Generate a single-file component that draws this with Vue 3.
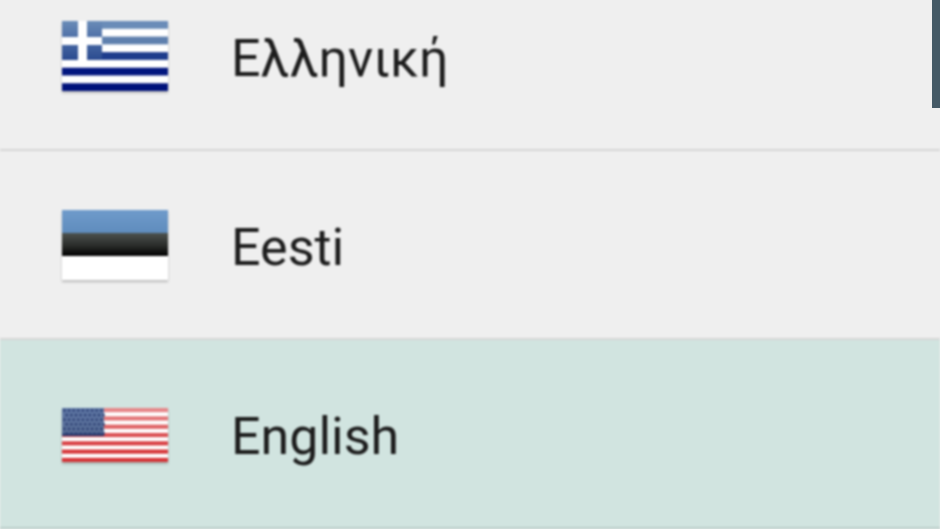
<script setup>
const languages = [
  { name: 'Ελληνική', flag: 'gr' },
  { name: 'Eesti', flag: 'ee' },
  { name: 'English', flag: 'us', selected: true }
]
const usStripes = Array.from({ length: 7 }, (_, i) => i * 2)
const grStripes = [
  { y: 0, fill: '#6a8cb8' },
  { y: 2, fill: '#5f80ae' },
  { y: 4, fill: '#1d3c8c' },
  { y: 6, fill: '#02167f' },
  { y: 8, fill: '#00127a' }
]
const stars = []
for (let r = 0; r < 6; r++) for (let c = 0; c < 9; c++) stars.push({ x: 2.5 + c * 4.6 + (r % 2) * 2.3, y: 2.5 + r * 4.6 })
</script>

<template>
  <main class="screen">
    <ul class="list">
      <li v-for="lang in languages" :key="lang.name" class="row" :class="{ selected: lang.selected }">
        <div class="flag-slot">
          <svg v-if="lang.flag === 'gr'" class="flag flag-tall" viewBox="0 0 106 70" preserveAspectRatio="none">
            <defs>
              <linearGradient id="grCanton" x1="0" y1="0" x2="0" y2="1">
                <stop offset="0" stop-color="#6a8cb8" />
                <stop offset="1" stop-color="#2a4a90" />
              </linearGradient>
            </defs>
            <rect width="106" height="70" fill="#fff" />
            <rect v-for="s in grStripes" :key="s.y" width="106" height="7.8" :y="s.y * 7.78" :fill="s.fill" />
            <rect width="40" height="39" fill="url(#grCanton)" />
            <rect x="16" width="9" height="39" fill="#fff" />
            <rect y="16" width="40" height="8" fill="#fff" />
          </svg>
          <svg v-else-if="lang.flag === 'ee'" class="flag flag-tall" viewBox="0 0 106 70" preserveAspectRatio="none">
            <defs>
              <linearGradient id="eeBlue" x1="0" y1="0" x2="0" y2="1">
                <stop offset="0" stop-color="#6f9bcb" />
                <stop offset="1" stop-color="#5f8cbd" />
              </linearGradient>
              <linearGradient id="eeBlack" x1="0" y1="0" x2="0" y2="1">
                <stop offset="0" stop-color="#4c524e" />
                <stop offset=".55" stop-color="#2a2c2a" />
                <stop offset="1" stop-color="#000" />
              </linearGradient>
            </defs>
            <rect width="106" height="23" fill="url(#eeBlue)" />
            <rect y="23" width="106" height="23" fill="url(#eeBlack)" />
            <rect y="46" width="106" height="24" fill="#fff" />
          </svg>
          <svg v-else class="flag flag-short" viewBox="0 0 106 54" preserveAspectRatio="none">
            <defs>
              <linearGradient id="usGloss" x1="0" y1="0" x2="0" y2="1">
                <stop offset="0" stop-color="#fff" stop-opacity=".45" />
                <stop offset=".75" stop-color="#fff" stop-opacity=".05" />
              </linearGradient>
              <linearGradient id="usCanton" x1="0" y1="0" x2="0" y2="1">
                <stop offset="0" stop-color="#5f78a6" />
                <stop offset=".85" stop-color="#5a7098" />
                <stop offset="1" stop-color="#1b2f66" />
              </linearGradient>
            </defs>
            <rect width="106" height="54" fill="#fff" />
            <rect v-for="i in usStripes" :key="i" :y="i * 4.154" width="106" height="4.154" fill="#d42a2e" />
            <rect width="106" height="54" fill="url(#usGloss)" />
            <rect width="42" height="28" fill="url(#usCanton)" />
            <circle v-for="(s, i) in stars" :key="i" :cx="s.x" :cy="s.y" r="1.3" fill="#2a3c70" />
          </svg>
        </div>
        <span class="name">{{ lang.name }}</span>
      </li>
    </ul>
    <div class="scrollbar"></div>
  </main>
</template>

<style scoped>
.screen {
  position: relative;
  width: 940px;
  height: 529px;
  overflow: hidden;
  background: #efefef;
}
.list {
  list-style: none;
  margin: -38px 0 0;
  padding: 0;
  filter: blur(0.8px);
}
.row {
  display: flex;
  align-items: center;
  box-sizing: border-box;
  height: 189px;
  padding-left: 62px;
  border-bottom: 2px solid #d6d6d6;
}
.row.selected {
  background: #d1e4e0;
  border-bottom-color: #b9cdc9;
}
.flag-slot {
  display: flex;
  align-items: center;
  width: 106px;
  margin-right: 63px;
}
.flag {
  display: block;
  width: 106px;
  filter: drop-shadow(0 2px 1px rgba(0, 0, 0, 0.22));
}
.flag-tall { height: 70px; }
.flag-short { height: 54px; margin-top: 2px; }
.name {
  font-family: Roboto, "Noto Sans", sans-serif;
  font-size: 52px;
  line-height: 60px;
  padding-top: 7px;
  color: #1c1c1c;
}
.scrollbar {
  position: absolute;
  top: 0;
  right: 0;
  width: 8px;
  height: 108px;
  background: #455a66;
}
</style>

<style>
html, body { margin: 0; background: #efefef; overflow: hidden; }
</style>
